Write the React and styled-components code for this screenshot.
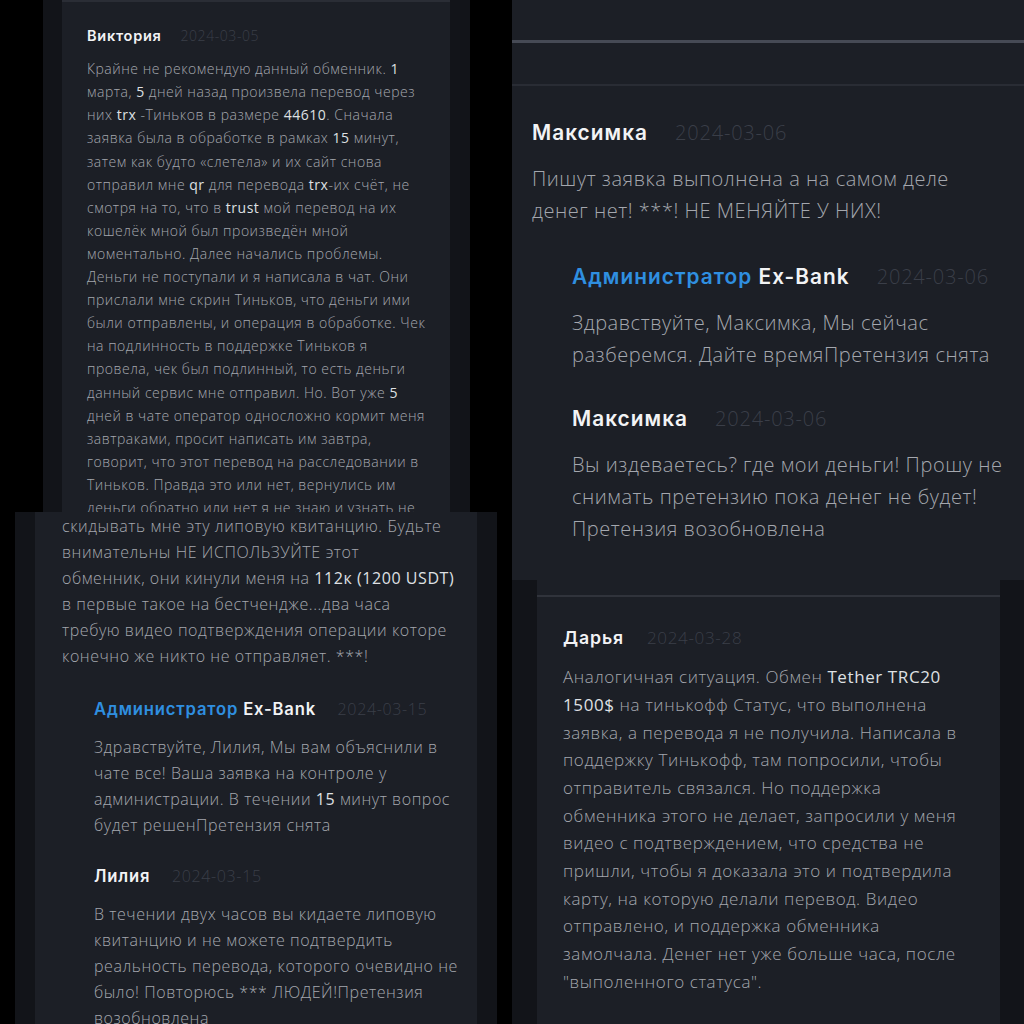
import React from 'react';
import styled, { createGlobalStyle } from 'styled-components';

const Global = createGlobalStyle`
  html, body {
    margin: 0;
    padding: 0;
    background: #000;
  }
  * {
    box-sizing: border-box;
  }
`;

const Collage = styled.div`
  width: 1024px;
  height: 1024px;
  display: grid;
  grid-template-columns: 512px 512px;
  background: #000;
  overflow: hidden;
`;

const Column = styled.div`
  display: flex;
  flex-direction: column;
`;

const Shot = styled.div`
  height: ${p => p.$h}px;
  padding: 0 ${p => p.$outRight}px 0 ${p => p.$outLeft}px;
  background: #000;
  overflow: hidden;
  display: flex;
`;

const Frame = styled.div`
  flex: 1;
  display: flex;
  padding: 0 ${p => p.$right}px 0 ${p => p.$left}px;
  background: #121419;
`;

// each screenshot was taken at its own zoom, so size, leading and tracking come in as props
const Card = styled.div`
  flex: 1;
  background: #1c1f26;
  font-size: ${p => p.$size}px;
  --lh: ${p => p.$lh}em;
  --ls: ${p => p.$ls}em;
  padding: ${p => p.$top}px 0 0 ${p => p.$left}px;
  border-top: ${p => (p.$edge ? '2px solid #2a2d35' : 'none')};
  overflow: hidden;
`;

const TopRules = styled.div`
  margin: 0 0 31px -20px;
  padding-top: 40px;
`;

const Rule = styled.div`
  height: ${p => p.$h}px;
  background: ${p => p.$c};
  margin-bottom: ${p => p.$gap || 0}px;
`;

const Divider = styled.div`
  height: 2px;
  background: #30333b;
  margin: 0 0 27px -26px;
`;

const Comment = styled.div`
  & + & {
    margin-top: 1.62em;
  }
`;

const Replies = styled.div`
  margin: 1.72em 0 0 2em;
`;

const Head = styled.div`
  display: flex;
  align-items: baseline;
  gap: 1.35em;
  line-height: 1.6em;
  margin-bottom: 0.7em;
  white-space: nowrap;
`;

const Name = styled.span`
  font-family: Inter, "Noto Sans", sans-serif;
  font-weight: 600;
  font-size: 1.04em;
  letter-spacing: 0.05em;
  color: #f2f3f5;
`;

const Admin = styled.span`
  color: #2f8fe0;
`;

const Date = styled.span`
  font-family: "Open Sans", Roboto, sans-serif;
  font-weight: 300;
  font-size: 1em;
  letter-spacing: 0.04em;
  color: #3a3e48;
`;

const Body = styled.div`
  font-family: "Open Sans", Roboto, sans-serif;
  font-weight: 300;
  letter-spacing: var(--ls);
  line-height: var(--lh);
  color: #a4a7ae;
`;

const Line = styled.div`
  white-space: nowrap;
`;

const Em = styled.span`
  color: #dfe0e3;
  font-weight: 400;
`;

const Text = ({ lines }) => (
  <Body>
    {lines.map((l, i) => (
      <Line key={i}>{l}</Line>
    ))}
  </Body>
);

const Header = ({ name, date, admin }) => (
  <Head>
    <Name>
      {admin ? (
        <>
          <Admin>Администратор</Admin> Ex-Bank
        </>
      ) : (
        name
      )}
    </Name>
    <Date>{date}</Date>
  </Head>
);

const viktoria = [
  <>Крайне не рекомендую данный обменник. <Em>1</Em></>,
  <>марта, <Em>5</Em> дней назад произвела перевод через</>,
  <>них <Em>trx</Em> -Тиньков в размере <Em>44610</Em>. Сначала</>,
  <>заявка была в обработке в рамках <Em>15</Em> минут,</>,
  'затем как будто «слетела» и их сайт снова',
  <>отправил мне <Em>qr</Em> для перевода <Em>trx</Em>-их счёт, не</>,
  <>смотря на то, что в <Em>trust</Em> мой перевод на их</>,
  'кошелёк мной был произведён мной',
  'моментально. Далее начались проблемы.',
  'Деньги не поступали и я написала в чат. Они',
  'прислали мне скрин Тиньков, что деньги ими',
  'были отправлены, и операция в обработке. Чек',
  'на подлинность в поддержке Тиньков я',
  'провела, чек был подлинный, то есть деньги',
  <>данный сервис мне отправил. Но. Вот уже <Em>5</Em></>,
  'дней в чате оператор односложно кормит меня',
  'завтраками, просит написать им завтра,',
  'говорит, что этот перевод на расследовании в',
  'Тиньков. Правда это или нет, вернулись им',
  'деньги обратно или нет я не знаю и узнать не',
];

const liliaTail = [
  'скидывать мне эту липовую квитанцию. Будьте',
  'внимательны НЕ ИСПОЛЬЗУЙТЕ этот',
  <>обменник, они кинули меня на <Em>112к (1200 USDT)</Em></>,
  'в первые такое на бестчендже...два часа',
  'требую видео подтверждения операции которе',
  'конечно же никто не отправляет. ***!',
];

const adminLilia = [
  'Здравствуйте, Лилия, Мы вам объяснили в',
  'чате все! Ваша заявка на контроле у',
  <>администрации. В течении <Em>15</Em> минут вопрос</>,
  'будет решенПретензия снята',
];

const liliaAgain = [
  'В течении двух часов вы кидаете липовую',
  'квитанцию и не можете подтвердить',
  'реальность перевода, которого очевидно не',
  'было! Повторюсь *** ЛЮДЕЙ!Претензия',
  'возобновлена',
];

const maksimka = [
  'Пишут заявка выполнена а на самом деле',
  'денег нет! ***! НЕ МЕНЯЙТЕ У НИХ!',
];

const adminMaksimka = [
  'Здравствуйте, Максимка, Мы сейчас',
  'разберемся. Дайте времяПретензия снята',
];

const maksimkaAgain = [
  'Вы издеваетесь? где мои деньги! Прошу не',
  'снимать претензию пока денег не будет!',
  'Претензия возобновлена',
];

const darya = [
  <>Аналогичная ситуация. Обмен <Em>Tether TRC20</Em></>,
  <><Em>1500$</Em> на тинькофф Статус, что выполнена</>,
  'заявка, а перевода я не получила. Написала в',
  'поддержку Тинькофф, там попросили, чтобы',
  'отправитель связался. Но поддержка',
  'обменника этого не делает, запросили у меня',
  'видео с подтверждением, что средства не',
  'пришли, чтобы я доказала это и подтвердила',
  'карту, на которую делали перевод. Видео',
  'отправлено, и поддержка обменника',
  'замолчала. Денег нет уже больше часа, после',
  '"выполенного статуса".',
];

export default function App() {
  return (
    <>
      <Global />
      <Collage>
        <Column>
          <Shot $h={512} $outLeft={43} $outRight={42}>
            <Frame $left={19} $right={20}>
              <Card $size={14} $lh={1.65} $ls={0.037} $top={23} $left={25} $edge>
                <Comment>
                  <Header name="Виктория" date="2024-03-05" />
                  <Text lines={viktoria} />
                </Comment>
              </Card>
            </Frame>
          </Shot>
          <Shot $h={512} $outLeft={15} $outRight={15}>
            <Frame $left={20} $right={20}>
              <Card $size={16} $lh={1.63} $ls={0.035} $top={1} $left={27}>
                <Comment>
                  <Text lines={liliaTail} />
                  <Replies>
                    <Comment>
                      <Header admin date="2024-03-15" />
                      <Text lines={adminLilia} />
                    </Comment>
                    <Comment>
                      <Header name="Лилия" date="2024-03-15" />
                      <Text lines={liliaAgain} />
                    </Comment>
                  </Replies>
                </Comment>
              </Card>
            </Frame>
          </Shot>
        </Column>
        <Column>
          <Shot $h={580} $outLeft={0} $outRight={0}>
            <Frame $left={0} $right={0}>
              <Card $size={20} $lh={1.59} $ls={0.027} $top={0} $left={20}>
                <TopRules>
                  <Rule $h={3} $c="#464a55" $gap={41} />
                  <Rule $h={2} $c="#292c34" />
                </TopRules>
                <Comment>
                  <Header name="Максимка" date="2024-03-06" />
                  <Text lines={maksimka} />
                  <Replies>
                    <Comment>
                      <Header admin date="2024-03-06" />
                      <Text lines={adminMaksimka} />
                    </Comment>
                    <Comment>
                      <Header name="Максимка" date="2024-03-06" />
                      <Text lines={maksimkaAgain} />
                    </Comment>
                  </Replies>
                </Comment>
              </Card>
            </Frame>
          </Shot>
          <Shot $h={444} $outLeft={0} $outRight={0}>
            <Frame $left={25} $right={24}>
              <Card $size={17} $lh={1.63} $ls={0.035} $top={15} $left={26}>
                <Divider />
                <Comment>
                  <Header name="Дарья" date="2024-03-28" />
                  <Text lines={darya} />
                </Comment>
              </Card>
            </Frame>
          </Shot>
        </Column>
      </Collage>
    </>
  );
}
